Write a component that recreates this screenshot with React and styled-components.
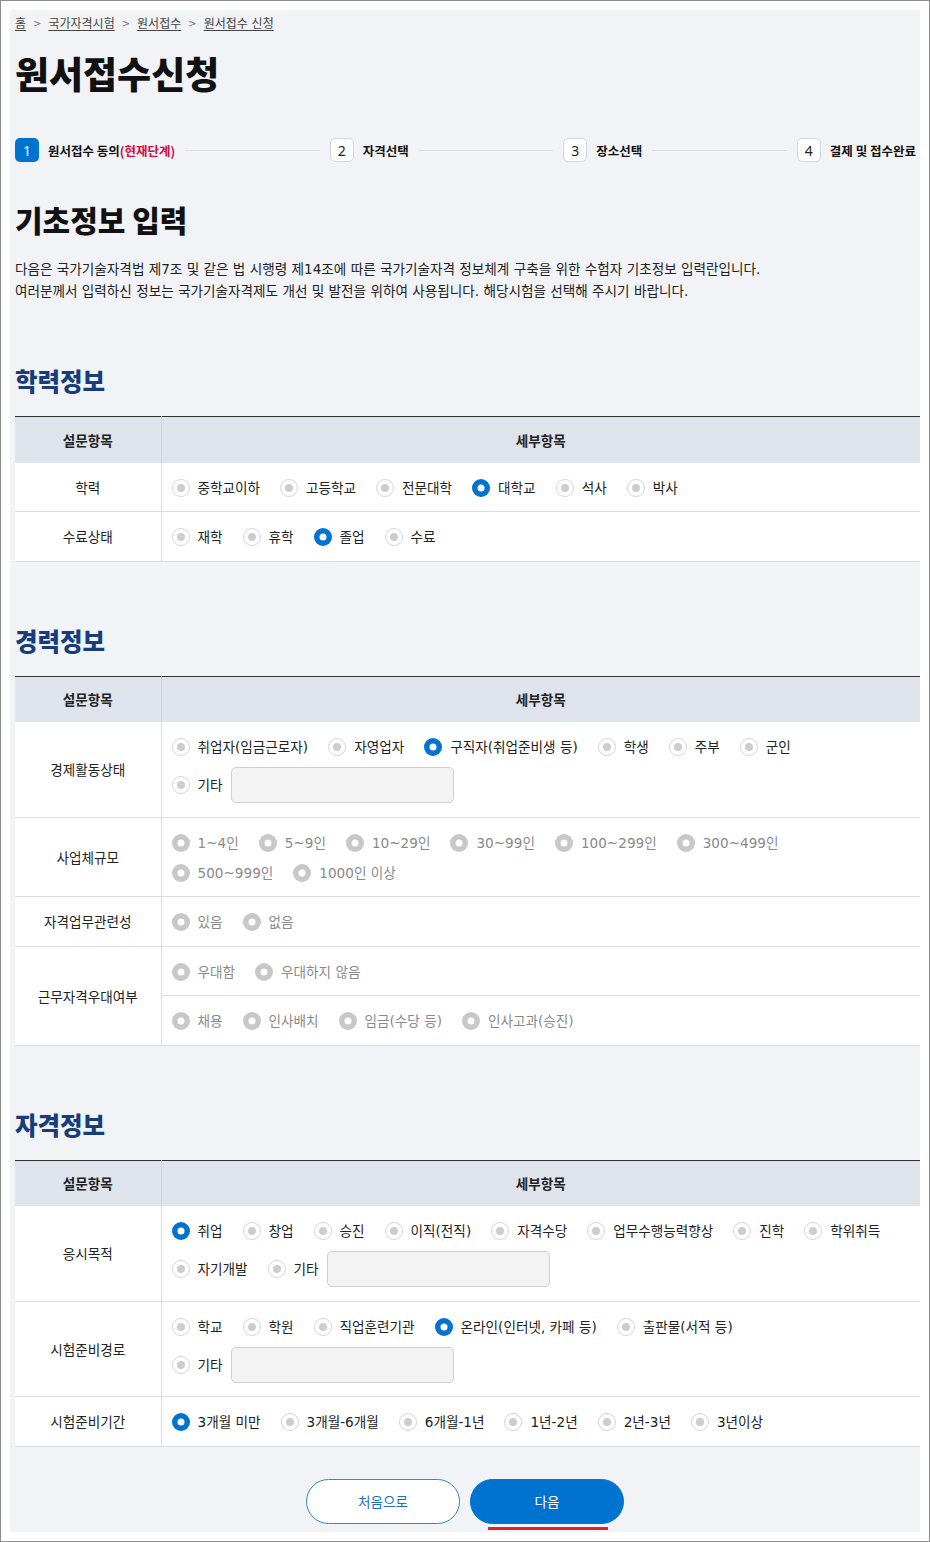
import React from 'react';
import styled, { createGlobalStyle, css } from 'styled-components';

//Global

const GlobalStyle = createGlobalStyle`
  * { box-sizing: border-box; }
  body {
    margin: 0;
    background: #fff;
    font-family: "DejaVu Sans", "Noto Sans CJK KR", sans-serif;
    color: #222;
  }
`;

const korean = `"Noto Sans CJK KR", "Noto Sans", sans-serif`;

//Style components

const Frame = styled.div`
  width: 930px;
  min-height: 1542px;
  border: 1px solid #8c8c8c;
  padding: 9px;
  background: #fff;
`;

const Page = styled.div`
  background: #f1f3f7;
  padding: 5px 0 8px 5px;
`;

const Breadcrumb = styled.nav`
  display: flex;
  align-items: center;
  gap: 7px;
  padding-top: 1px;
  font-size: 12px;
  line-height: 16px;
  color: #444;
`;

const Crumb = styled.a`
  color: #444;
  text-decoration: underline;
  text-underline-offset: 2px;
`;

const Sep = styled.span`
  color: #777;
  font-size: 10px;
`;

const PageTitle = styled.h1`
  margin: 21px 0 0;
  font-family: ${korean};
  font-size: 37px;
  line-height: 40px;
  font-weight: 800;
  color: #111;
`;

const Steps = styled.ol`
  display: flex;
  align-items: center;
  list-style: none;
  margin: 45px 4px 0 0;
  padding: 0;
`;

const Step = styled.li`
  display: flex;
  align-items: center;
  flex-shrink: 0;
`;

const StepNum = styled.span`
  width: 24px;
  height: 24px;
  border-radius: 5px;
  display: flex;
  align-items: center;
  justify-content: center;
  font-family: "Noto Sans", sans-serif;
  font-size: 14px;
  ${(p) =>
    p.$active
      ? css`
          background: #0073d0;
          color: #fff;
        `
      : css`
          background: #fff;
          border: 1px solid #d3d6dc;
          color: #222;
        `}
`;

const StepLabel = styled.span`
  margin-left: 9px;
  font-family: ${korean};
  font-size: 12.5px;
  font-weight: 700;
  color: #111;
`;

const Current = styled.span`
  color: #d5083f;
`;

const StepLine = styled.span`
  flex: 1;
  height: 1px;
  margin: 0 10px;
  background: #dadde3;
`;

const SectionTitle = styled.h2`
  margin: 39px 0 0;
  font-family: ${korean};
  font-size: 30px;
  line-height: 36px;
  font-weight: 800;
  color: #111;
`;

const Desc = styled.p`
  margin: 21px 0 0;
  font-size: 13.6px;
  line-height: 22px;
  color: #222;
`;

const GroupTitle = styled.h3`
  margin: 64px 0 20px;
  font-family: ${korean};
  font-size: 24.5px;
  line-height: 30px;
  font-weight: 800;
  color: #173e7a;
`;

const Table = styled.table`
  width: 100%;
  border-collapse: collapse;
  table-layout: fixed;
  border-top: 1px solid #333;
  background: #fff;
  font-size: 13.6px;
`;

const HeadCell = styled.th`
  height: 46px;
  padding: 0;
  background: #dfe3eb;
  font-weight: 700;
  color: #222;
  text-align: center;
  & + & {
    border-left: 1px solid #cfd4dc;
  }
`;

const LabelCell = styled.th`
  font-weight: 400;
  color: #222;
  text-align: center;
  vertical-align: middle;
  border-right: 1px solid #dcdcdc;
  border-bottom: 1px solid #dcdcdc;
`;

const OptionCell = styled.td`
  padding: 15px 10px 13.5px;
  border-bottom: 1px solid #dcdcdc;
`;

const Lines = styled.div`
  display: flex;
  flex-direction: column;
  gap: 10px;
`;

const Line = styled.div`
  display: flex;
  align-items: center;
  gap: 20px;
  min-height: 20px;
`;

const Option = styled.label`
  display: flex;
  align-items: center;
  gap: 8px;
  line-height: 20px;
  white-space: nowrap;
  color: ${(p) => (p.$disabled ? '#8a8a8a' : '#222')};
`;

const Dot = styled.span`
  position: relative;
  width: 18px;
  height: 18px;
  border-radius: 50%;
  flex-shrink: 0;
  &::after {
    content: '';
    position: absolute;
    top: 50%;
    left: 50%;
    border-radius: 50%;
    transform: translate(-50%, -50%);
  }
  ${(p) =>
    p.$state === 'on'
      ? css`
          background: #0073d0;
          &::after {
            width: 7px;
            height: 7px;
            background: #fff;
          }
        `
      : p.$state === 'dis'
      ? css`
          background: #c8c8c8;
          &::after {
            width: 7px;
            height: 7px;
            background: #fff;
          }
        `
      : css`
          background: #fff;
          border: 1px solid #d6d6d6;
          &::after {
            width: 8px;
            height: 8px;
            background: #cdcdcd;
          }
        `}
`;

const TextInput = styled.input`
  width: 223px;
  height: 36px;
  border: 1px solid #cfcfcf;
  border-radius: 5px;
  background: #f3f3f3;
  outline: none;
`;

const Buttons = styled.div`
  display: flex;
  justify-content: center;
  gap: 10px;
  margin: 32px 0 0 -5px;
`;

const Button = styled.button`
  position: relative;
  width: 154px;
  height: 45px;
  border-radius: 23px;
  font-family: inherit;
  font-size: 13.6px;
  cursor: pointer;
  ${(p) =>
    p.$primary
      ? css`
          background: #0073d0;
          border: 1px solid #0073d0;
          color: #fff;
          &::after {
            content: '';
            position: absolute;
            left: 17px;
            bottom: -7px;
            width: 120px;
            height: 3px;
            background: #e3202c;
          }
        `
      : css`
          background: #fff;
          border: 1px solid #2d86d6;
          color: #1d6fc0;
        `}
`;

//Data

const on = (t) => ({ t, s: 'on' });
const off = (t) => ({ t, s: 'off' });
const dis = (t) => ({ t, s: 'dis' });
const etc = { t: '기타', s: 'off', input: true };

const groups = [
  {
    title: '학력정보',
    rows: [
      { label: '학력', lines: [[off('중학교이하'), off('고등학교'), off('전문대학'), on('대학교'), off('석사'), off('박사')]] },
      { label: '수료상태', lines: [[off('재학'), off('휴학'), on('졸업'), off('수료')]] },
    ],
  },
  {
    title: '경력정보',
    rows: [
      {
        label: '경제활동상태',
        lines: [
          [off('취업자(임금근로자)'), off('자영업자'), on('구직자(취업준비생 등)'), off('학생'), off('주부'), off('군인')],
          [etc],
        ],
      },
      {
        label: '사업체규모',
        lines: [
          [dis('1~4인'), dis('5~9인'), dis('10~29인'), dis('30~99인'), dis('100~299인'), dis('300~499인')],
          [dis('500~999인'), dis('1000인 이상')],
        ],
      },
      { label: '자격업무관련성', lines: [[dis('있음'), dis('없음')]] },
      {
        label: '근무자격우대여부',
        sub: [
          [[dis('우대함'), dis('우대하지 않음')]],
          [[dis('채용'), dis('인사배치'), dis('임금(수당 등)'), dis('인사고과(승진)')]],
        ],
      },
    ],
  },
  {
    title: '자격정보',
    rows: [
      {
        label: '응시목적',
        lines: [
          [on('취업'), off('창업'), off('승진'), off('이직(전직)'), off('자격수당'), off('업무수행능력향상'), off('진학'), off('학위취득')],
          [off('자기개발'), etc],
        ],
      },
      {
        label: '시험준비경로',
        lines: [
          [off('학교'), off('학원'), off('직업훈련기관'), on('온라인(인터넷, 카페 등)'), off('출판물(서적 등)')],
          [etc],
        ],
      },
      {
        label: '시험준비기간',
        lines: [[on('3개월 미만'), off('3개월-6개월'), off('6개월-1년'), off('1년-2년'), off('2년-3년'), off('3년이상')]],
      },
    ],
  },
];

const steps = ['원서접수 동의', '자격선택', '장소선택', '결제 및 접수완료'];

//React components

const OptionLines = ({ lines }) => (
  <Lines>
    {lines.map((line, i) => (
      <Line key={i}>
        {line.map((o) => (
          <Option key={o.t} $disabled={o.s === 'dis'}>
            <Dot $state={o.s} />
            {o.t}
            {o.input && <TextInput type="text" />}
          </Option>
        ))}
      </Line>
    ))}
  </Lines>
);

const SurveyTable = ({ rows }) => (
  <Table>
    <colgroup>
      <col style={{ width: 146 }} />
      <col />
    </colgroup>
    <thead>
      <tr>
        <HeadCell>설문항목</HeadCell>
        <HeadCell>세부항목</HeadCell>
      </tr>
    </thead>
    <tbody>
      {rows.map((row) =>
        row.sub ? (
          row.sub.map((lines, i) => (
            <tr key={row.label + i}>
              {i === 0 && <LabelCell rowSpan={row.sub.length}>{row.label}</LabelCell>}
              <OptionCell>
                <OptionLines lines={lines} />
              </OptionCell>
            </tr>
          ))
        ) : (
          <tr key={row.label}>
            <LabelCell>{row.label}</LabelCell>
            <OptionCell>
              <OptionLines lines={row.lines} />
            </OptionCell>
          </tr>
        )
      )}
    </tbody>
  </Table>
);

const App = () => {
  return (
    <Frame>
      <GlobalStyle />
      <Page>
        <Breadcrumb>
          <Crumb>홈</Crumb>
          <Sep>&gt;</Sep>
          <Crumb>국가자격시험</Crumb>
          <Sep>&gt;</Sep>
          <Crumb>원서접수</Crumb>
          <Sep>&gt;</Sep>
          <Crumb>원서접수 신청</Crumb>
        </Breadcrumb>

        <PageTitle>원서접수신청</PageTitle>

        <Steps>
          {steps.map((label, i) => (
            <React.Fragment key={label}>
              {i > 0 && <StepLine />}
              <Step>
                <StepNum $active={i === 0}>{i + 1}</StepNum>
                <StepLabel>
                  {label}
                  {i === 0 && <Current>(현재단계)</Current>}
                </StepLabel>
              </Step>
            </React.Fragment>
          ))}
        </Steps>

        <SectionTitle>기초정보 입력</SectionTitle>
        <Desc>
          다음은 국가기술자격법 제7조 및 같은 법 시행령 제14조에 따른 국가기술자격 정보체계 구축을 위한 수험자 기초정보 입력란입니다.
          <br />
          여러분께서 입력하신 정보는 국가기술자격제도 개선 및 발전을 위하여 사용됩니다. 해당시험을 선택해 주시기 바랍니다.
        </Desc>

        {groups.map((g) => (
          <section key={g.title}>
            <GroupTitle>{g.title}</GroupTitle>
            <SurveyTable rows={g.rows} />
          </section>
        ))}

        <Buttons>
          <Button>처음으로</Button>
          <Button $primary>다음</Button>
        </Buttons>
      </Page>
    </Frame>
  );
};

export default App;
